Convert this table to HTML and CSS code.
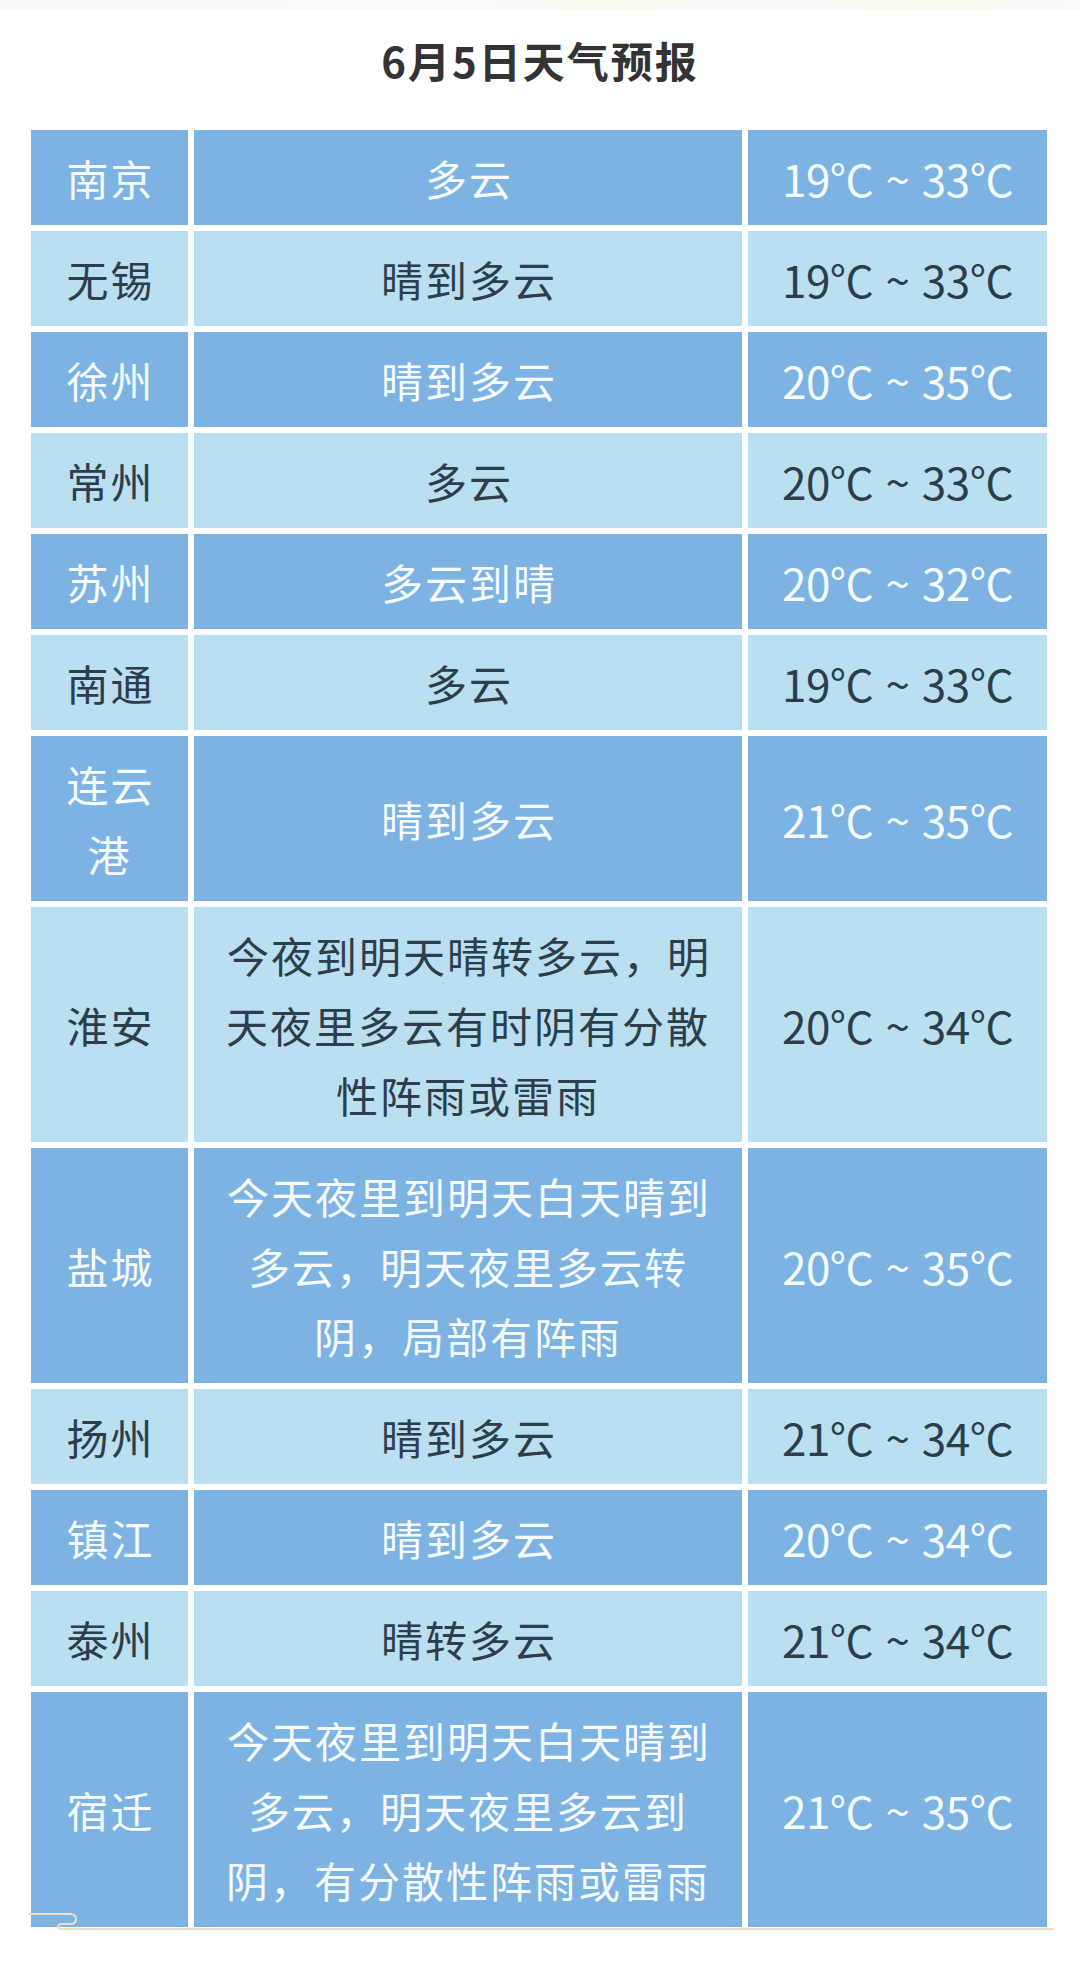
FILE: index.html
```html
<!DOCTYPE html>
<html lang="zh-CN">
<head>
<meta charset="utf-8">
<title>6月5日天气预报</title>
<link rel="stylesheet" href="styles.css">
</head>
<body>
<div class="page">
  <div class="top-strip"></div>
  <h1 class="title">6月5日天气预报</h1>
  <div class="table">
    <div class="row dark"><div class="cell city">南京</div><div class="cell desc">多云</div><div class="cell temp">19°C ~ 33°C</div></div>
    <div class="row light"><div class="cell city">无锡</div><div class="cell desc">晴到多云</div><div class="cell temp">19°C ~ 33°C</div></div>
    <div class="row dark"><div class="cell city">徐州</div><div class="cell desc">晴到多云</div><div class="cell temp">20°C ~ 35°C</div></div>
    <div class="row light"><div class="cell city">常州</div><div class="cell desc">多云</div><div class="cell temp">20°C ~ 33°C</div></div>
    <div class="row dark"><div class="cell city">苏州</div><div class="cell desc">多云到晴</div><div class="cell temp">20°C ~ 32°C</div></div>
    <div class="row light"><div class="cell city">南通</div><div class="cell desc">多云</div><div class="cell temp">19°C ~ 33°C</div></div>
    <div class="row dark"><div class="cell city">连云港</div><div class="cell desc">晴到多云</div><div class="cell temp">21°C ~ 35°C</div></div>
    <div class="row light"><div class="cell city">淮安</div><div class="cell desc">今夜到明天晴转多云，明天夜里多云有时阴有分散性阵雨或雷雨</div><div class="cell temp">20°C ~ 34°C</div></div>
    <div class="row dark"><div class="cell city">盐城</div><div class="cell desc">今天夜里到明天白天晴到多云，明天夜里多云转阴，局部有阵雨</div><div class="cell temp">20°C ~ 35°C</div></div>
    <div class="row light"><div class="cell city">扬州</div><div class="cell desc">晴到多云</div><div class="cell temp">21°C ~ 34°C</div></div>
    <div class="row dark"><div class="cell city">镇江</div><div class="cell desc">晴到多云</div><div class="cell temp">20°C ~ 34°C</div></div>
    <div class="row light"><div class="cell city">泰州</div><div class="cell desc">晴转多云</div><div class="cell temp">21°C ~ 34°C</div></div>
    <div class="row dark"><div class="cell city">宿迁</div><div class="cell desc">今天夜里到明天白天晴到多云，明天夜里多云到阴，有分散性阵雨或雷雨</div><div class="cell temp">21°C ~ 35°C</div></div>
    <svg class="scroll-deco" width="1080" height="40" viewBox="0 1890 1080 40" aria-hidden="true">
      <path d="M28 1909 H70 Q76 1909 76 1914 Q76 1919 70 1919 H62 Q58 1919 58 1922 Q58 1924 62 1924 H1054" fill="none" stroke="#ece2cc" stroke-width="2"/>
    </svg>
  </div>
</div>
</body>
</html>
```

FILE: styles.css
```css
* {
  box-sizing: border-box;
}

html, body {
  margin: 0;
  padding: 0;
  background: #ffffff;
}

body {
  font-family: "Noto Sans CJK SC", "Noto Sans", sans-serif;
}

.page {
  position: relative;
  width: 1080px;
  min-height: 1980px;
  background: #ffffff;
}

.top-strip {
  height: 10px;
  background: linear-gradient(90deg, #f4f9fb 0%, #f6fbf9 45%, #f7fbe9 55%, #f6fbf6 70%, #f4fbe8 88%, #f6fbfa 100%);
  opacity: 0.8;
}

.title {
  margin: 0;
  height: 120px;
  display: flex;
  align-items: center;
  justify-content: center;
  padding-bottom: 22px;
  font-size: 42px;
  font-weight: 700;
  letter-spacing: 2px;
  color: #333333;
}

.table {
  position: relative;
  margin-left: 31px;
  width: 1016px;
  display: flex;
  flex-direction: column;
  gap: 6px;
}

.row {
  display: grid;
  grid-template-columns: 157px 548px 299px;
  column-gap: 6px;
}

.cell {
  display: flex;
  align-items: center;
  justify-content: center;
  text-align: center;
  padding: 12.5px 18px;
  font-size: 42px;
  line-height: 70px;
  letter-spacing: 2px;
  text-indent: 2px;
}

.city {
  padding: 12.5px 14px;
}

.temp {
  font-size: 44px;
  letter-spacing: -0.5px;
  text-indent: 0;
  word-spacing: 3px;
}

.dark .cell {
  background: #7db3e3;
  color: #f5faff;
}

.light .cell {
  background: #b9dff1;
  color: #2c3d4c;
}

.scroll-deco {
  position: absolute;
  left: -31px;
  bottom: -8px;
  pointer-events: none;
}
```
